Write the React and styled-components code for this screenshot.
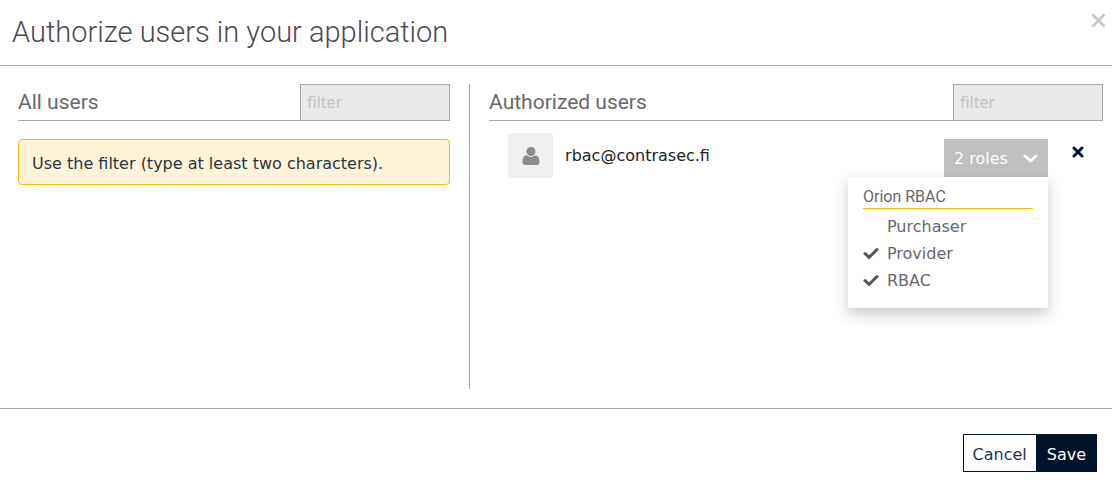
import React, { useState } from "react";
import styled, { createGlobalStyle } from "styled-components";

const GlobalStyle = createGlobalStyle`
  *, *::before, *::after { box-sizing: border-box; }
  body {
    margin: 0;
    background: #fff;
    color: #02142c;
    font: 16px/24px "DejaVu Sans", sans-serif;
  }
  button, input { font: inherit; }
`;

const headingFont = `Roboto, sans-serif`;
const ruleColor = "#a7a8a9";

const Icon = styled.svg`
  display: block;
  flex: none;
  width: ${(p) => p.$size}px;
  height: ${(p) => p.$size}px;
  fill: currentColor;
`;

const Dialog = styled.section`
  width: 100%;
  background: #fff;
`;

const DialogHeader = styled.header`
  display: flex;
  align-items: flex-start;
  justify-content: space-between;
  padding: 12px 6px 13px 12px;
  border-bottom: 1px solid ${ruleColor};
`;

const DialogTitle = styled.h1`
  margin: 0;
  font: 300 29px/40px ${headingFont};
  color: #4b4b4f;
`;

const IconButton = styled.button`
  display: flex;
  padding: 0;
  border: 0;
  background: none;
  color: ${(p) => p.$color};
  cursor: pointer;
`;

const Columns = styled.div`
  display: grid;
  grid-template-columns: 5fr 7fr;
  padding: 18px 9px 19px 18px;
  border-bottom: 1px solid ${ruleColor};
`;

const Column = styled.section`
  min-height: 305px;
  &:first-child {
    padding-right: 19px;
    border-right: 1px solid ${ruleColor};
  }
  &:last-child { padding-left: 19px; }
`;

const ColumnHeader = styled.div`
  display: flex;
  justify-content: space-between;
  align-items: center;
  border-bottom: 1px solid ${ruleColor};
`;

const ColumnTitle = styled.h2`
  margin: 0;
  font: 400 21px/36px ${headingFont};
  color: #68686c;
`;

const FilterInput = styled.input`
  width: 150px;
  height: 37px;
  margin-bottom: -1px;
  padding: 0 6px 2px;
  border: 1px solid ${ruleColor};
  border-radius: 0;
  background: #e9e9eb;
  font: 16px/20px "Noto Sans", sans-serif;
  &::placeholder { color: #c3c3c3; opacity: 1; }
`;

const Notice = styled.p`
  margin: 18px 0 0;
  padding: 12px 13px 8px;
  border: 1px solid #ffb900;
  border-radius: 4px;
  background: #fff4d8;
  color: #26364a;
`;

const UserRow = styled.div`
  display: flex;
  align-items: flex-start;
  padding: 12px 19px 0;
`;

const Avatar = styled.div`
  display: grid;
  place-items: center;
  width: 45px;
  height: 45px;
  border-radius: 3px;
  background: #f0f0f0;
  color: #8c8c8c;
`;

const UserName = styled.span`
  flex: 1;
  padding: 11px 12px;
  color: #222;
`;

const RoleSelector = styled.div`
  position: relative;
  margin: 6px 24px 0 0;
`;

const RoleButton = styled.button`
  display: flex;
  align-items: center;
  justify-content: space-between;
  width: 104px;
  height: 38px;
  padding: 1px 9px 0 10px;
  border: 0;
  background: #c0c0c0;
  color: #fff;
  cursor: pointer;
`;

const RoleMenu = styled.fieldset`
  position: absolute;
  top: 100%;
  right: 0;
  width: 200px;
  margin: 0;
  padding: 8px 15px 14px;
  border: 0;
  background: #fff;
  box-shadow: 0 6px 14px rgba(0, 0, 0, 0.22);
  color: #68686c;
`;

const RoleGroup = styled.legend`
  float: left;
  width: 100%;
  margin-bottom: 4px;
  padding: 0;
  border-bottom: 1px solid #ffb900;
  font: 400 16px/23px ${headingFont};
`;

const RoleOption = styled.label`
  display: flex;
  align-items: center;
  clear: both;
  height: 27px;
  gap: 8px;
  cursor: pointer;
  svg { visibility: hidden; color: #55555a; }
  input:checked + svg { visibility: visible; }
`;

const HiddenCheckbox = styled.input`
  position: absolute;
  opacity: 0;
  pointer-events: none;
`;

const RemoveSlot = styled.div`
  padding-top: 13px;
`;

const DialogFooter = styled.footer`
  display: flex;
  justify-content: flex-end;
  padding: 25px 15px 14px;
`;

const ActionButton = styled.button`
  height: 38px;
  padding: 3px 9px 0;
  border: 1px solid #02142c;
  border-radius: 0;
  background: ${(p) => (p.$primary ? "#02142c" : "#fff")};
  color: ${(p) => (p.$primary ? "#fff" : "#26364a")};
  cursor: pointer;
  & + & { padding: 3px 10px 0; border-left: 0; }
`;

const UserIcon = () => (
  <Icon $size={18} viewBox="0 0 18 18" aria-hidden="true">
    <circle cx="9" cy="4.500" r="4.500" />
    <path d="M4.600 8.300Q9 11.800 13.400 8.300C16.600 8.800 17.500 11.500 17.500 15Q17.500 18 14.800 18H3.200Q.5 18 .5 15C.5 11.500 1.400 8.800 4.600 8.300Z" />
  </Icon>
);

const CheckIcon = () => (
  <Icon $size={16} viewBox="0 0 16 16" aria-hidden="true">
    <path d="M2 7.500l4 4L14 3.500" fill="none" stroke="currentColor" strokeWidth="3" strokeLinecap="round" />
  </Icon>
);

const TimesIcon = () => (
  <Icon $size={12} viewBox="0 0 12 12" aria-hidden="true">
    <path d="M2 2l8 8M10 2L2 10" stroke="currentColor" strokeWidth="3" strokeLinecap="round" />
  </Icon>
);

const CloseIcon = () => (
  <Icon $size={16} viewBox="0 0 16 16" aria-hidden="true">
    <path d="M2.500 2.500l12 12M14.500 2.500L2.500 14.500" stroke="currentColor" strokeWidth="2.800" />
  </Icon>
);

const ChevronIcon = () => (
  <Icon $size={16} viewBox="0 0 16 16" aria-hidden="true">
    <path d="M2 5l5.500 5L13 5" fill="none" stroke="currentColor" strokeWidth="3" strokeLinecap="round" />
  </Icon>
);

const ROLES = ["Purchaser", "Provider", "RBAC"];

export default function App() {
  const [roles, setRoles] = useState(["Provider", "RBAC"]);
  const [open, setOpen] = useState(true);
  const toggle = (role) =>
    setRoles((cur) => (cur.includes(role) ? cur.filter((r) => r !== role) : [...cur, role]));

  return (
    <>
      <GlobalStyle />
      <Dialog aria-labelledby="dialog-title">
        <DialogHeader>
          <DialogTitle id="dialog-title">Authorize users in your application</DialogTitle>
          <IconButton type="button" $color="#c6c9d0" aria-label="Close">
            <CloseIcon />
          </IconButton>
        </DialogHeader>
        <Columns>
          <Column>
            <ColumnHeader>
              <ColumnTitle>All users</ColumnTitle>
              <FilterInput type="text" placeholder="filter" aria-label="Filter all users" />
            </ColumnHeader>
            <Notice>Use the filter (type at least two characters).</Notice>
          </Column>
          <Column>
            <ColumnHeader>
              <ColumnTitle>Authorized users</ColumnTitle>
              <FilterInput type="text" placeholder="filter" aria-label="Filter authorized users" />
            </ColumnHeader>
            <UserRow>
              <Avatar>
                <UserIcon />
              </Avatar>
              <UserName>rbac@contrasec.fi</UserName>
              <RoleSelector>
                <RoleButton type="button" aria-expanded={open} onClick={() => setOpen(!open)}>
                  {roles.length} roles
                  <ChevronIcon />
                </RoleButton>
                {open && (
                  <RoleMenu>
                    <RoleGroup>Orion RBAC</RoleGroup>
                    {ROLES.map((role) => (
                      <RoleOption key={role}>
                        <HiddenCheckbox
                          type="checkbox"
                          checked={roles.includes(role)}
                          onChange={() => toggle(role)}
                        />
                        <CheckIcon />
                        {role}
                      </RoleOption>
                    ))}
                  </RoleMenu>
                )}
              </RoleSelector>
              <RemoveSlot>
                <IconButton type="button" $color="#02142c" aria-label="Remove rbac@contrasec.fi">
                  <TimesIcon />
                </IconButton>
              </RemoveSlot>
            </UserRow>
          </Column>
        </Columns>
        <DialogFooter>
          <ActionButton type="button">Cancel</ActionButton>
          <ActionButton type="button" $primary>
            Save
          </ActionButton>
        </DialogFooter>
      </Dialog>
    </>
  );
}
